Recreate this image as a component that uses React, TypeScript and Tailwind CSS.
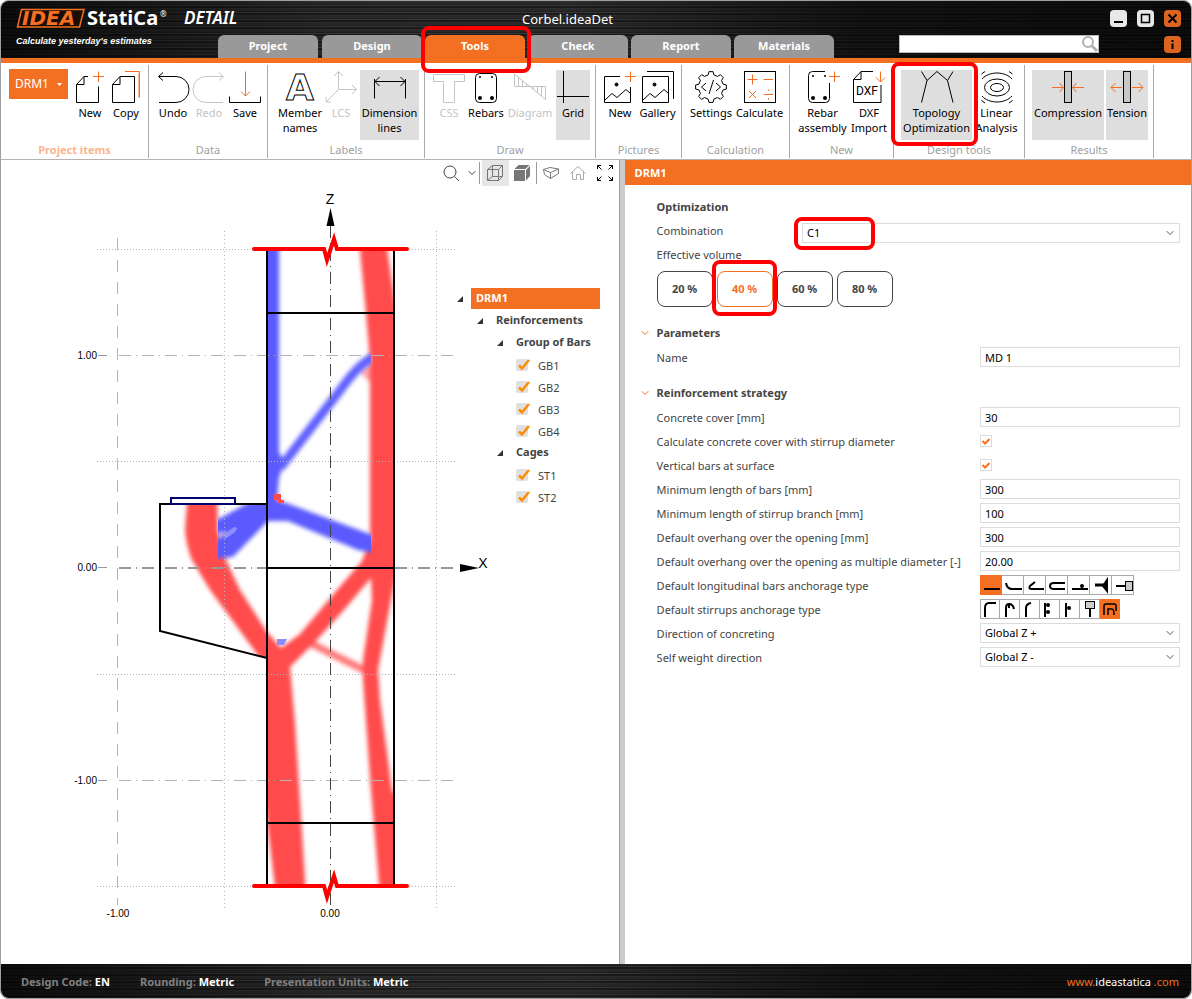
import { useState } from 'react'
import type { ReactNode } from 'react'
import clsx from 'clsx'
import { ChevronDown } from 'lucide-react'

const METAL =
  'bg-[linear-gradient(90deg,rgba(0,0,0,0.75)_0%,rgba(0,0,0,0.1)_28%,rgba(0,0,0,0.05)_48%,rgba(0,0,0,0.6)_72%,rgba(0,0,0,0.75)_100%),repeating-linear-gradient(0deg,#303030_0px,#303030_1px,#1c1c1c_1px,#1c1c1c_3px,#3c3c3c_3px,#3c3c3c_4px,#222222_4px,#222222_5px,#2c2c2c_5px,#2c2c2c_7px)]'

const TABS = ['Project', 'Design', 'Tools', 'Check', 'Report', 'Materials']

// Red frame that marks a step of the tutorial
function Marker({ className }: { className: string }) {
  return <span className={clsx('pointer-events-none absolute z-10 rounded-lg border-4 border-[#ff0000]', className)} />
}

function Icon({ children }: { children: ReactNode }) {
  return (
    <svg width="32" height="32" viewBox="0 0 32 32" fill="none" stroke="currentColor" className="shrink-0 overflow-visible">
      {children}
    </svg>
  )
}

const ORANGE = '#f36f21'

function gearPath() {
  const teeth = 8
  const points: string[] = []
  for (let i = 0; i < teeth; i++) {
    const steps: [number, number][] = [[-0.3, 12.4], [-0.17, 15.5], [0.17, 15.5], [0.3, 12.4]]
    steps.forEach(([offset, r]) => {
      const angle = ((i + offset) / teeth) * Math.PI * 2
      points.push(`${(16 + r * Math.sin(angle)).toFixed(2)} ${(16 - r * Math.cos(angle)).toFixed(2)}`)
    })
  }
  return `M${points.join('L')}Z`
}

const icons: Record<string, ReactNode> = {
  newItem: (
    <Icon>
      <path d="M14 5.5H10L2.5 13.5V31.5H24.5V15.5M10 5.5V13.5H2.5" />
      <path d="M24.5 .5V11M19 5.5H30" stroke={ORANGE} />
    </Icon>
  ),
  copy: (
    <Icon>
      <path d="M10 5.5H24.5V31.5H2.5V13.5ZM10 5.5V13.5H2.5" />
      <path d="M15 .5H29.5V26.5" stroke={ORANGE} />
      <path d="M28.5 2V26.5" stroke={ORANGE} opacity=".5" />
    </Icon>
  ),
  undo: (
    <Icon>
      <path d="M2 5.5H19A13 13 0 0 1 19 31.5H2M6 1.5L1.5 5.5L6 9.5" />
    </Icon>
  ),
  redo: (
    <Icon>
      <path d="M30 5.5H13A13 13 0 0 0 13 31.5H30M26 1.5L30.5 5.5L26 9.5" />
    </Icon>
  ),
  save: (
    <Icon>
      <path d="M.5 25.5V31.5H31.5V25.5" />
      <path d="M16.5 .5V25M12 20.5L16.5 25L21 20.5" stroke={ORANGE} />
    </Icon>
  ),
  member: (
    <Icon>
      <text x="16" y="29" textAnchor="middle" fontSize="36" strokeWidth="1" className="fill-white font-['DejaVu_Sans'] font-bold">A</text>
    </Icon>
  ),
  lcs: (
    <Icon>
      <path d="M13.5 .5V18.5H31M13.5 18.5L1 31M9 5L13.5 .5L18 5M27 14L31.5 18.5L27 23M1 26V31H6" />
    </Icon>
  ),
  dimension: (
    <Icon>
      <path d="M.5 8V27.5M31.5 8V27.5M1 10.5H31M5.5 6L1 10.5L5.5 15M26.5 6L31 10.5L26.5 15" />
    </Icon>
  ),
  css: (
    <Icon>
      <path d="M.5 3.5H31.5V10.5H21.5V31.5H10.5V10.5H.5Z" />
    </Icon>
  ),
  rebars: (
    <Icon>
      <rect x="5.5" y="2.5" width="21" height="29" rx="4" />
      <g fill="currentColor" stroke="none">
        <circle cx="10" cy="6" r="1" />
        <circle cx="22" cy="6" r="1" />
        <circle cx="10" cy="27" r="2" />
        <circle cx="22" cy="27" r="2" />
      </g>
    </Icon>
  ),
  diagram: (
    <Icon>
      <path d="M.5 3V15.5H31.5V28.5ZM4.5 6V15.5M8.5 9.5V15.5M12.5 13V15.5M19.5 15.5V18.5M23.5 15.5V22M27.5 15.5V25" />
    </Icon>
  ),
  grid: (
    <Icon>
      <path d="M6.5 0V32M0 25.5H32" />
    </Icon>
  ),
  newPicture: (
    <Icon>
      <path d="M16 5.5H.5V31.5H26.5V16M1 29L8 22.5L13 26.5L22 18.5L26 22" />
      <circle cx="12.5" cy="13.5" r="1.5" fill="currentColor" />
      <path d="M26.5 .5V11M21 5.5H32" stroke={ORANGE} />
    </Icon>
  ),
  gallery: (
    <Icon>
      <path d="M.5 5.5H26.5V31.5H.5ZM1 29L8 22.5L13 26.5L22 18.5L26 22M5 .5H31.5V28" />
      <circle cx="12.5" cy="13.5" r="1.5" fill="currentColor" />
    </Icon>
  ),
  settings: (
    <Icon>
      <path d={gearPath()} strokeLinejoin="round" />
      <path d="M18.5 9L14 23M11 12L6.5 16L11 20M21 12L25.5 16L21 20" />
    </Icon>
  ),
  calculate: (
    <Icon>
      <rect x=".5" y=".5" width="31" height="31" />
      <path
        d="M3.5 8.5H13.5M8.5 3.5V13.5M19.5 8.5H29M5 20L12 27M12 20L5 27M19.5 23.5H29M24.5 18.5V20M24.5 27V28.5"
        stroke={ORANGE}
      />
    </Icon>
  ),
  assembly: (
    <Icon>
      <path d="M18 .5H5.5A4 4 0 0 0 1.5 4.5V27.5A4 4 0 0 0 5.5 31.5H18.5A4 4 0 0 0 22.5 27.5V12" />
      <g fill="currentColor" stroke="none">
        <circle cx="6" cy="5" r="1" />
        <circle cx="18" cy="5" r="1" />
        <circle cx="6" cy="27" r="2" />
        <circle cx="18" cy="27" r="2" />
      </g>
      <path d="M27.5 .5V11M22 5.5H33" stroke={ORANGE} />
    </Icon>
  ),
  dxf: (
    <Icon>
      <path d="M20 .5H8L.5 8.5V31.5H28V14M8 .5V8.5H.5" />
      <text x="14" y="24" textAnchor="middle" fontSize="12" fill="currentColor" stroke="none" className="font-['Roboto']">DXF</text>
      <path d="M27.5 .5V11M23 6.5L27.5 11L32 6.5" stroke={ORANGE} />
    </Icon>
  ),
  topology: (
    <Icon>
      <path d="M.5 .5L6 9.5L16 .5L26.5 9.5L32 .5M6 9.5L.5 31.5M26.5 9.5L32 31.5" />
    </Icon>
  ),
  linear: (
    <Icon>
      <ellipse cx="16" cy="16.5" rx="6.5" ry="4" />
      <ellipse cx="16" cy="16.5" rx="12.5" ry="8.5" />
      <path d="M1 8C8 0 24 0 31 8M1 25C8 33 24 33 31 25M.5 3L4 .5M28 .5L31.5 3M.5 29.5L4 32M28 32L31.5 29.5" />
    </Icon>
  ),
  compression: (
    <Icon>
      <rect x="12.5" y=".5" width="7" height="31" fill="#c8c8c8" />
      <path d="M0 16.5H11.5M7.5 12L11.5 16.5L7.5 21M32 16.5H20.5M24.5 12L20.5 16.5L24.5 21" stroke={ORANGE} />
    </Icon>
  ),
  tension: (
    <Icon>
      <rect x="12.5" y=".5" width="7" height="31" fill="#c8c8c8" />
      <path d="M0 16.5H11M4.5 12L0 16.5L4.5 21M21 16.5H32M27.5 12L32 16.5L27.5 21" stroke={ORANGE} />
    </Icon>
  ),
}

interface ToolProps {
  icon: string
  label: string
  width: string
  disabled?: boolean
  pressed?: boolean
  marked?: boolean
}

function Tool({ icon, label, width, disabled, pressed, marked }: ToolProps) {
  return (
    <button
      type="button"
      disabled={disabled}
      aria-pressed={pressed}
      className={clsx(
        'relative mt-px flex h-[70px] shrink-0 flex-col items-center pt-px',
        width,
        pressed && 'mx-px bg-[#dedede]',
        disabled && 'text-[#c4c4c4]'
      )}
    >
      {icons[icon]}
      <span className="mt-0.5 whitespace-pre text-center text-[11px] leading-[15px]">{label}</span>
      {marked && <Marker className="-top-2 -bottom-1.5 -left-[10px] -right-1.5" />}
    </button>
  )
}

interface GroupProps {
  title: string
  width: string
  highlight?: boolean
  children: ReactNode
}

function Group({ title, width, highlight, children }: GroupProps) {
  return (
    <div className={clsx('mt-0.5 mb-px flex shrink-0 flex-col justify-between border-r border-[#aaaaaa] pt-1', width)}>
      <div className="flex justify-end pr-1">{children}</div>
      <div className={clsx('text-center text-[11px] leading-4', highlight ? 'font-bold text-[#fbb58c]' : 'text-[#a0a0a0]')}>
        {title}
      </div>
    </div>
  )
}

function Header() {
  const [active, setActive] = useState('Tools')
  return (
    <header className={clsx('flex h-[62px] shrink-0 rounded-t-lg border-b-[5px] border-[#f36f21]', METAL)}>
      <div className="w-[216px] shrink-0 pt-[5px] pl-4">
        <svg width="200" height="40" viewBox="17 6 200 40" className="overflow-visible">
          <path d="M21.500 9.500H84L79.500 27H17.500Z" fill="#1a0d05" stroke={ORANGE} strokeWidth="1.500" />
          <text x="22" y="25" fontSize="20" fill={ORANGE} className="font-['DejaVu_Sans'] font-bold italic">IDEA</text>
          <text x="87" y="25" fontSize="20" fill="#fff" className="font-['Noto_Sans'] font-bold">StatiCa</text>
          <text x="160" y="17" fontSize="8" fill="#fff" className="font-['Noto_Sans']">®</text>
          <text x="184" y="24" fontSize="17" fill="#fff" className="font-['Noto_Sans'] font-semibold italic">DETAIL</text>
          <text x="16" y="44" fontSize="9" fill="#fff" className="font-['Liberation_Sans'] font-bold italic">
            Calculate yesterday's estimates
          </text>
        </svg>
      </div>

      <div className="flex min-w-0 flex-1 flex-col justify-between pl-px">
        <h1 className="pt-2 pl-[18px] text-center text-[13px] leading-5 text-white">Corbel.ideaDet</h1>
        <nav className="flex gap-[3px]">
          {TABS.map(tab => (
            <button
              key={tab}
              type="button"
              onClick={() => setActive(tab)}
              className={clsx(
                'relative h-[23px] w-[100px] shrink-0 rounded-t-md text-[11px] font-bold text-white first:mr-px',
                tab === active ? 'bg-[#f36f21]' : 'bg-[#999999]'
              )}
            >
              {tab}
              {tab === 'Tools' && <Marker className="-top-[9px] -bottom-[15px] -left-1 -right-1.5" />}
            </button>
          ))}
        </nav>
      </div>

      <div className="flex w-[292px] shrink-0 flex-col gap-2 pt-[9px] pr-[10px]">
        <div className="flex justify-end gap-[10px]">
          <button type="button" aria-label="Minimize" className="flex size-[17px] items-center justify-center rounded-sm bg-[#e8e8e8]">
            <svg width="17" height="17"><path d="M4 12H13" stroke="#000" strokeWidth="2" /></svg>
          </button>
          <button type="button" aria-label="Maximize" className="flex size-[17px] items-center justify-center rounded-sm bg-[#e8e8e8]">
            <svg width="17" height="17"><rect x="4.500" y="4.500" width="8" height="8" fill="none" stroke="#000" strokeWidth="1.500" /></svg>
          </button>
          <button type="button" aria-label="Close" className="flex size-[17px] items-center justify-center rounded-sm bg-[#dc6420]">
            <svg width="17" height="17"><path d="M4.500 4.500L12.500 12.500M12.500 4.500L4.500 12.500" stroke="#000" strokeWidth="2" /></svg>
          </button>
        </div>
        <div className="flex items-center justify-between">
          <div className="relative h-[18px] w-[200px]">
            <input aria-label="Search" className="block h-full w-full border border-[#bbbbbb] bg-white pl-1 pr-5 text-[11px] outline-none" />
            <svg width="18" height="18" viewBox="0 0 18 18" className="pointer-events-none absolute top-0 right-0" fill="none" stroke="#b0b0b0">
              <circle cx="7" cy="7" r="5" strokeWidth="2" />
              <path d="M11 11L16 16" strokeWidth="3" />
            </svg>
          </div>
          <button type="button" aria-label="About" className="flex size-[17px] items-center justify-center rounded-sm bg-[#dc6420]">
            <svg width="17" height="17"><path d="M8.500 4V6M8.500 7.500V13" stroke="#000" strokeWidth="2" /></svg>
          </button>
        </div>
      </div>
    </header>
  )
}

function Ribbon() {
  return (
    <div className="flex h-[97px] shrink-0 overflow-x-clip border-b border-[#b4b4b4] bg-white text-black">
      <Group title="Project items" width="w-[148px]" highlight>
        <button type="button" className="mr-1 flex h-[30px] w-[59px] items-center justify-between bg-[#f36f21] px-1.5 text-xs text-white">
          DRM1
          <svg width="5" height="3"><path d="M0 0H5L2.500 3Z" fill="#fff" /></svg>
        </button>
        <Tool icon="newItem" label="New" width="w-9" />
        <Tool icon="copy" label="Copy" width="w-9" />
      </Group>
      <Group title="Data" width="w-[119px]">
        <Tool icon="undo" label="Undo" width="w-9" />
        <Tool icon="redo" label="Redo" width="w-9" disabled />
        <Tool icon="save" label="Save" width="w-9" />
      </Group>
      <Group title="Labels" width="w-[157px]">
        <Tool icon="member" label={'Member\nnames'} width="w-[46px]" />
        <Tool icon="lcs" label="LCS" width="w-9" disabled />
        <Tool icon="dimension" label={'Dimension\nlines'} width="w-[59px]" pressed />
      </Group>
      <Group title="Draw" width="w-[171px]">
        <Tool icon="css" label="CSS" width="w-9" disabled />
        <Tool icon="rebars" label="Rebars" width="w-[38px]" />
        <Tool icon="diagram" label="Diagram" width="w-[50px]" disabled />
        <Tool icon="grid" label="Grid" width="w-[34px]" pressed />
      </Group>
      <Group title="Pictures" width="w-[86px]">
        <Tool icon="newPicture" label="New" width="w-9" />
        <Tool icon="gallery" label="Gallery" width="w-[39px]" />
      </Group>
      <Group title="Calculation" width="w-[108px]">
        <Tool icon="settings" label="Settings" width="w-[46px]" />
        <Tool icon="calculate" label="Calculate" width="w-[51px]" />
      </Group>
      <Group title="New" width="w-[104px]">
        <Tool icon="assembly" label={'Rebar\nassembly'} width="w-[53px]" />
        <Tool icon="dxf" label={'DXF\nImport'} width="w-10" />
      </Group>
      <Group title="Design tools" width="w-[131px]">
        <Tool icon="topology" label={'Topology\nOptimization'} width="w-[71px]" pressed marked />
        <Tool icon="linear" label={'Linear\nAnalysis'} width="w-[47px]" />
      </Group>
      <Group title="Results" width="w-[129px]">
        <Tool icon="compression" label="Compression" width="w-[72px]" pressed />
        <Tool icon="tension" label="Tension" width="w-[42px]" pressed />
      </Group>
    </div>
  )
}

// Topology optimization result: red = compression, blue = tension
function ModelDrawing() {
  const half = [224.5, 436.5]
  return (
    <svg width="618" height="760" viewBox="1 160 618 760" className="block shrink-0">
      <defs>
        <clipPath id="member">
          <path d="M267 249H394V886H267V658L160 631V504H267Z" />
        </clipPath>
        <clipPath id="tension">
          <path d="M267 249H371V560H218V504H267Z" />
        </clipPath>
        <filter id="soft" x="-10%" y="-10%" width="120%" height="120%">
          <feGaussianBlur stdDeviation="2" />
        </filter>
      </defs>

      <g clipPath="url(#member)">
        <g filter="url(#soft)" fill="#ff4b4b">
          <path d="M359 240L366 313L370 360V540L362 561L337 590L300 634L281 648L267 632L240 590L226 560L218 532L217 490H188L185 530Q186 545 192 560L210 590L257 654L262 665V780L276 896H306L295 723L290 667L314 643L343 611L371 578L372 600L363 660V680L371 790L380 896H400V800L392 790L380 700L378 670L391 600L396 575V310L386 240Z" />
          <path d="M308 642L364 670" stroke="#ff4b4b" strokeWidth="7" opacity=".75" />
          <path d="M360 372L372 362V385Z" opacity=".5" />
        </g>
        <g clipPath="url(#tension)">
          <g filter="url(#soft)" fill="#5a5aff">
            <path d="M256 240H279V452L284 462L279 478L277 500L289 504L378 537V554L358 550L288 521H268L233 557L214 559V541L228 532L213 534V522L246 504L256 500Z" />
            <path d="M280 468L341 389Q357 366 373 357" fill="none" strokeWidth="9" stroke="#6060ff" />
          </g>
        </g>
        <path d="M224 534L234 527Q240 527 234 533L225 539Z" fill="#a3a3ff" opacity=".7" />
        <path d="M274 494H281V500H284V503H278V500H274Z" fill="#ff4b4b" />
        <path d="M277 639L287 639L284 645H277Z" fill="#8c8cff" />
      </g>

      {/* grid */}
      <g fill="none" stroke="#b4b4b4">
        {half.map(x => (
          <path key={x} d={`M${x} 231V908`} strokeDasharray="1 3" />
        ))}
        {[249.5, 461.5, 674.5, 886.5].map(y => (
          <path key={y} d={`M97 ${y}H457`} strokeDasharray="1 2" />
        ))}
        <path d="M117.500 238V905" strokeDasharray="12 10" />
        <path d="M119 355.500H453M119 780.500H453" strokeDasharray="12 5 1 5" />
      </g>
      <path d="M119 568H458" stroke="#999" strokeWidth="2" strokeDasharray="12 5 1 5" />
      <path d="M330.500 226V906" stroke="#444" strokeDasharray="12 5 1 5" />

      {/* member outline */}
      <g fill="none" stroke="#000" strokeWidth="2">
        <path d="M267 249V886M394 249V886M267 313H394M267 568H394M267 823H394" />
        <path d="M267 504H160V631L267 658" />
        <rect x="171" y="498" width="64" height="6" stroke="#000070" />
      </g>

      {/* break lines */}
      <g fill="none" stroke="#ff0000" strokeWidth="4" strokeLinecap="round" strokeMiterlimit="20">
        <path d="M254 249H324L327 260L334 239L337 249H407" />
        <path d="M254 886H324L327 897L334 876L337 886H407" />
      </g>

      <path d="M330.500 208L334.500 226H326.500Z" />
      <path d="M479 568L460 564V572Z" />

      <g className="font-['Liberation_Sans']" fontSize="10">
        <text x="97" y="359" textAnchor="end">1.00</text>
        <text x="97" y="571" textAnchor="end">0.00</text>
        <text x="97" y="784" textAnchor="end">-1.00</text>
        <text x="118" y="917" textAnchor="middle">-1.00</text>
        <text x="330" y="917" textAnchor="middle">0.00</text>
        <text x="483" y="568" textAnchor="middle" fontSize="14">X</text>
        <text x="330" y="204" textAnchor="middle" fontSize="14">Z</text>
      </g>
      <g stroke="#999">
        <path d="M98 355.500H107M98 567.500H107M98 780.500H107" />
      </g>
    </svg>
  )
}

function ViewToolbar() {
  const btn = 'flex h-[26px] w-[27px] items-center justify-center'
  return (
    <div className="absolute top-0 right-0 flex items-center text-[#777777]">
      <button type="button" aria-label="Zoom" className={btn}>
        <svg width="18" height="18" fill="none" stroke="#444"><circle cx="8" cy="8" r="6" /><path d="M12.500 12.500L17 17" /></svg>
      </button>
      <button type="button" aria-label="Zoom options" className="flex h-[26px] w-3.5 items-center justify-center text-[#444444]">
        <ChevronDown size={12} />
      </button>
      <span className="mr-0.5 h-[22px] w-px bg-[#999999]" />
      <button type="button" aria-label="Wireframe" aria-pressed="true" className={clsx(btn, 'bg-[#e6e6e6]')}>
        <svg width="18" height="18" fill="none" stroke="currentColor">
          <path d="M1.500 5.500H12.500V16.500H1.500ZM1.500 5.500L6.500 1.500H16.500L12.500 5.500M16.500 1.500V12.500L12.500 16.500M6.500 1.500V12.500H16.500M6.500 12.500L1.500 16.500" />
        </svg>
      </button>
      <button type="button" aria-label="Solid" className={btn}>
        <svg width="18" height="18" fill="currentColor">
          <path d="M1 6H12V17H1ZM1.500 5L5.500 1H16.500L12.500 5ZM13 6L17 2V12L13 16.500Z" />
        </svg>
      </button>
      <span className="mr-px h-[22px] w-px bg-[#999999]" />
      <button type="button" aria-label="Perspective" className={btn}>
        <svg width="18" height="18" fill="none" stroke="currentColor">
          <path d="M1.500 5.500L8.500 8.500V14.500L2.500 10.500ZM8.500 8.500L16.500 5V9.500L8.500 14.500M1.500 5.500L8 3.500L16.500 5" />
        </svg>
      </button>
      <button type="button" aria-label="Home view" className={btn}>
        <svg width="18" height="18" fill="none" stroke="#aaaaaa">
          <path d="M1.500 9.500L9 2.500L16.500 9.500M3.500 8V15.500H7.500V10.500H11.500V15.500H14.500V8" />
        </svg>
      </button>
      <button type="button" aria-label="Fit to window" className={btn}>
        <svg width="18" height="18" fill="none" stroke="#000">
          <path d="M1.500 5V1.500H5M1.500 1.500L5.500 5.500M13 1.500H16.500V5M16.500 1.500L12.500 5.500M1.500 13V16.500H5M1.500 16.500L5.500 12.500M16.500 13V16.500H13M16.500 16.500L12.500 12.500" />
        </svg>
      </button>
    </div>
  )
}

function TreeNode({ label, selected, children }: { label: string; selected?: boolean; children?: ReactNode }) {
  return (
    <li>
      <div className="flex h-[22px] items-center">
        <svg width="6" height="6" className="mt-0.5 mr-2 shrink-0"><path d="M6 0V6H0Z" fill="#333" /></svg>
        <span className={clsx('h-[21px] flex-1 pl-[5px] font-bold leading-5', selected && 'bg-[#f36f21] text-white')}>{label}</span>
      </div>
      <ul className="pl-5">{children}</ul>
    </li>
  )
}

function TreeLeaf({ label }: { label: string }) {
  return (
    <li className="-ml-px">
      <label className="flex h-[22px] items-center pt-1">
        <span className="relative mr-2 size-3.5 shrink-0">
          <input type="checkbox" defaultChecked className="peer block size-3 appearance-none rounded-xs bg-[#e0e0e0]" />
          <svg width="14" height="13" className="pointer-events-none absolute top-0 left-0 hidden peer-checked:block" fill="none" stroke="#ff8c00" strokeWidth="2.500">
            <path d="M3 6.500L6 9.500L13 1" />
          </svg>
        </span>
        {label}
      </label>
    </li>
  )
}

function ModelTree() {
  return (
    <ul className="absolute top-[127px] left-[456px] w-[143px] text-[11px] text-[#444444]">
      <TreeNode label="DRM1" selected>
        <TreeNode label="Reinforcements">
          <TreeNode label="Group of Bars">
            {['GB1', 'GB2', 'GB3', 'GB4'].map(n => <TreeLeaf key={n} label={n} />)}
          </TreeNode>
          <TreeNode label="Cages">
            {['ST1', 'ST2'].map(n => <TreeLeaf key={n} label={n} />)}
          </TreeNode>
        </TreeNode>
      </TreeNode>
    </ul>
  )
}

function Section({ title }: { title: string }) {
  return (
    <h3 className="flex h-6 items-center font-bold">
      <ChevronDown size={12} strokeWidth={2} className="-ml-[18px] mr-1.5 text-[#f36f21]" />
      {title}
    </h3>
  )
}

function TextRow({ id, label, value }: { id: string; label: string; value: string }) {
  return (
    <div className="flex h-6 items-center justify-between">
      <label htmlFor={id} className="whitespace-nowrap pt-0.5">{label}</label>
      <input id={id} defaultValue={value} className="h-5 w-[200px] shrink-0 border border-[#dcdcdc] bg-white px-1 text-black outline-none" />
    </div>
  )
}

function CheckRow({ id, label }: { id: string; label: string }) {
  return (
    <div className="flex h-6 items-center justify-between">
      <label htmlFor={id} className="pt-0.5">{label}</label>
      <div className="relative w-[200px]">
        <input id={id} type="checkbox" defaultChecked className="peer block size-3 appearance-none border border-[#dcdcdc] bg-white" />
        <svg width="12" height="12" className="pointer-events-none absolute top-0 left-0 hidden peer-checked:block" fill="none" stroke={ORANGE} strokeWidth="2">
          <path d="M2.500 6L5 8.500L9.500 4" />
        </svg>
      </div>
    </div>
  )
}

function SelectBox({ id, value, className }: { id: string; value: string; className: string }) {
  return (
    <div className={clsx('relative', className)}>
      <select id={id} defaultValue={value} className="block h-5 w-full appearance-none border border-[#dcdcdc] bg-white px-1 text-black outline-none">
        <option>{value}</option>
      </select>
      <ChevronDown size={12} className="pointer-events-none absolute top-1 right-1 text-[#555555]" />
    </div>
  )
}

const barAnchors: ReactNode[] = [
  <path d="M3 13H19" />,
  <path d="M3 7Q4 13 9 13H19" />,
  <path d="M10 6L5 10Q3 13 7 13H19" />,
  <path d="M18 7H7Q3 7 3 10Q3 13 7 13H18" />,
  <><path d="M3 13H19" /><circle cx="13" cy="10" r="1" /></>,
  <><path d="M4 9H14" strokeWidth="3" /><path d="M16 4V15L12 10Z" fill="currentColor" /></>,
  <><path d="M3 10H12" /><rect x="12.500" y="5.500" width="7" height="9" fill="#ccc" strokeWidth="1" /></>,
]

const stirrupAnchors: ReactNode[] = [
  <path d="M5 17V8Q5 3 9 3H16" />,
  <path d="M6 17V8Q6 4 9 4Q13 4 14 9M9 4V8" />,
  <path d="M6 17V8Q6 4 11 3" />,
  <><path d="M5 3V17" /><circle cx="8" cy="5" r="1" /><circle cx="8" cy="12" r="1" /></>,
  <><path d="M6 3V17" /><circle cx="9" cy="8" r="1" /></>,
  <><rect x="5.500" y="1.500" width="9" height="7" fill="#ccc" strokeWidth="1" /><path d="M10 9V17" /></>,
  <path d="M4 15V6Q4 4 6 4H14Q16 4 16 6V11M8 15V9H12Q14 9 14 15" strokeWidth="1.500" />,
]

interface AnchorPickerProps {
  label: string
  shapes: ReactNode[]
  initial: number
  cell: string
}

function AnchorPicker({ label, shapes, initial, cell }: AnchorPickerProps) {
  const [selected, setSelected] = useState(initial)
  return (
    <div className="flex h-6 items-center justify-between">
      <span className="pt-0.5">{label}</span>
      <div role="group" aria-label={label} className="flex w-[200px]">
        {shapes.map((shape, i) => (
          <button
            key={i}
            type="button"
            aria-label={`${label} ${i + 1}`}
            aria-pressed={i === selected}
            onClick={() => setSelected(i)}
            className={clsx(
              'flex h-5 items-center justify-center border border-l-0 text-black first:border-l',
              cell,
              i === selected ? 'border-[#f36f21] bg-[#f36f21]' : 'border-[#a8a8a8] bg-white'
            )}
          >
            <svg width="20" height="18" className="shrink-0" fill="none" stroke="currentColor" strokeWidth="2">{shape}</svg>
          </button>
        ))}
      </div>
    </div>
  )
}

function PropertiesPanel() {
  const [volume, setVolume] = useState(40)
  return (
    <section className="min-w-0 flex-1 bg-white text-[11px] leading-4 text-[#444444]">
      <h2 className="h-[25px] bg-[#f36f21] pl-[10px] font-bold leading-[25px] text-white">DRM1</h2>
      <div className="pt-[10px] pr-[11px] pl-8">
        <h3 className="h-6 font-bold leading-6">Optimization</h3>
        <div className="flex h-6 items-end justify-between">
          <label htmlFor="combination" className="leading-6">Combination</label>
          <div className="relative w-[378px]">
            <SelectBox id="combination" value="C1" className="w-full" />
            <Marker className="-top-1.5 -left-2 h-[33px] w-[81px]" />
          </div>
        </div>
        <div className="h-6 leading-6">Effective volume</div>
        <div className="mt-1 flex gap-1">
          {[20, 40, 60, 80].map(v => (
            <button
              key={v}
              type="button"
              onClick={() => setVolume(v)}
              className={clsx(
                'relative h-9 w-14 rounded-lg border font-bold',
                v === volume ? 'border-[#f36f21] text-[#f36f21]' : 'border-[#444444]'
              )}
            >
              {v} %
              {v === 40 && <Marker className="-top-3 -bottom-[10px] -left-1.5 -right-[5px]" />}
            </button>
          ))}
        </div>

        <div className="mt-3.5">
          <Section title="Parameters" />
          <TextRow id="name" label="Name" value="MD 1" />
        </div>

        <div className="mt-3">
          <Section title="Reinforcement strategy" />
          <TextRow id="cover" label="Concrete cover [mm]" value="30" />
          <CheckRow id="stirrup-cover" label="Calculate concrete cover with stirrup diameter" />
          <CheckRow id="vertical" label="Vertical bars at surface" />
          <TextRow id="min-bars" label="Minimum length of bars [mm]" value="300" />
          <TextRow id="min-branch" label="Minimum length of stirrup branch [mm]" value="100" />
          <TextRow id="overhang" label="Default overhang over the opening [mm]" value="300" />
          <TextRow id="overhang-multiple" label="Default overhang over the opening as multiple diameter [-]" value="20.00" />
          <AnchorPicker label="Default longitudinal bars anchorage type" shapes={barAnchors} initial={0} cell="w-[22px]" />
          <AnchorPicker label="Default stirrups anchorage type" shapes={stirrupAnchors} initial={6} cell="w-5" />
          <div className="flex h-6 items-center justify-between">
            <label htmlFor="concreting" className="pt-0.5">Direction of concreting</label>
            <SelectBox id="concreting" value="Global Z +" className="w-[200px]" />
          </div>
          <div className="flex h-6 items-center justify-between">
            <label htmlFor="weight" className="pt-0.5">Self weight direction</label>
            <SelectBox id="weight" value="Global Z -" className="w-[200px]" />
          </div>
        </div>
      </div>
    </section>
  )
}

function Footer() {
  const items = [
    ['Design Code:', 'EN'],
    ['Rounding:', 'Metric'],
    ['Presentation Units:', 'Metric'],
  ]
  return (
    <footer className={clsx('flex h-[34px] shrink-0 items-center rounded-b-lg px-3 pt-0.5 text-[11px]', METAL)}>
      <div className="flex gap-[30px] pl-2 font-bold">
        {items.map(([name, value]) => (
          <span key={name} className="text-[#808080]">
            {name} <span className="text-white">{value}</span>
          </span>
        ))}
      </div>
      <a href="#" className="ml-auto text-[#f36f21]">
        www.<span className="text-white">ideastatica</span> .com
      </a>
    </footer>
  )
}

export default function App() {
  return (
    <div className="flex min-h-screen flex-col rounded-lg border border-[#a0a0a0] bg-white font-['Noto_Sans',sans-serif]">
      <Header />
      <Ribbon />
      <main className="flex flex-1">
        <section className="relative w-[51.9%] shrink-0 overflow-hidden bg-white">
          <ModelDrawing />
          <ViewToolbar />
          <ModelTree />
        </section>
        <div className="w-1.5 shrink-0 border-l border-[#a0a0a0] bg-[#cccccc]" />
        <PropertiesPanel />
      </main>
      <Footer />
    </div>
  )
}
